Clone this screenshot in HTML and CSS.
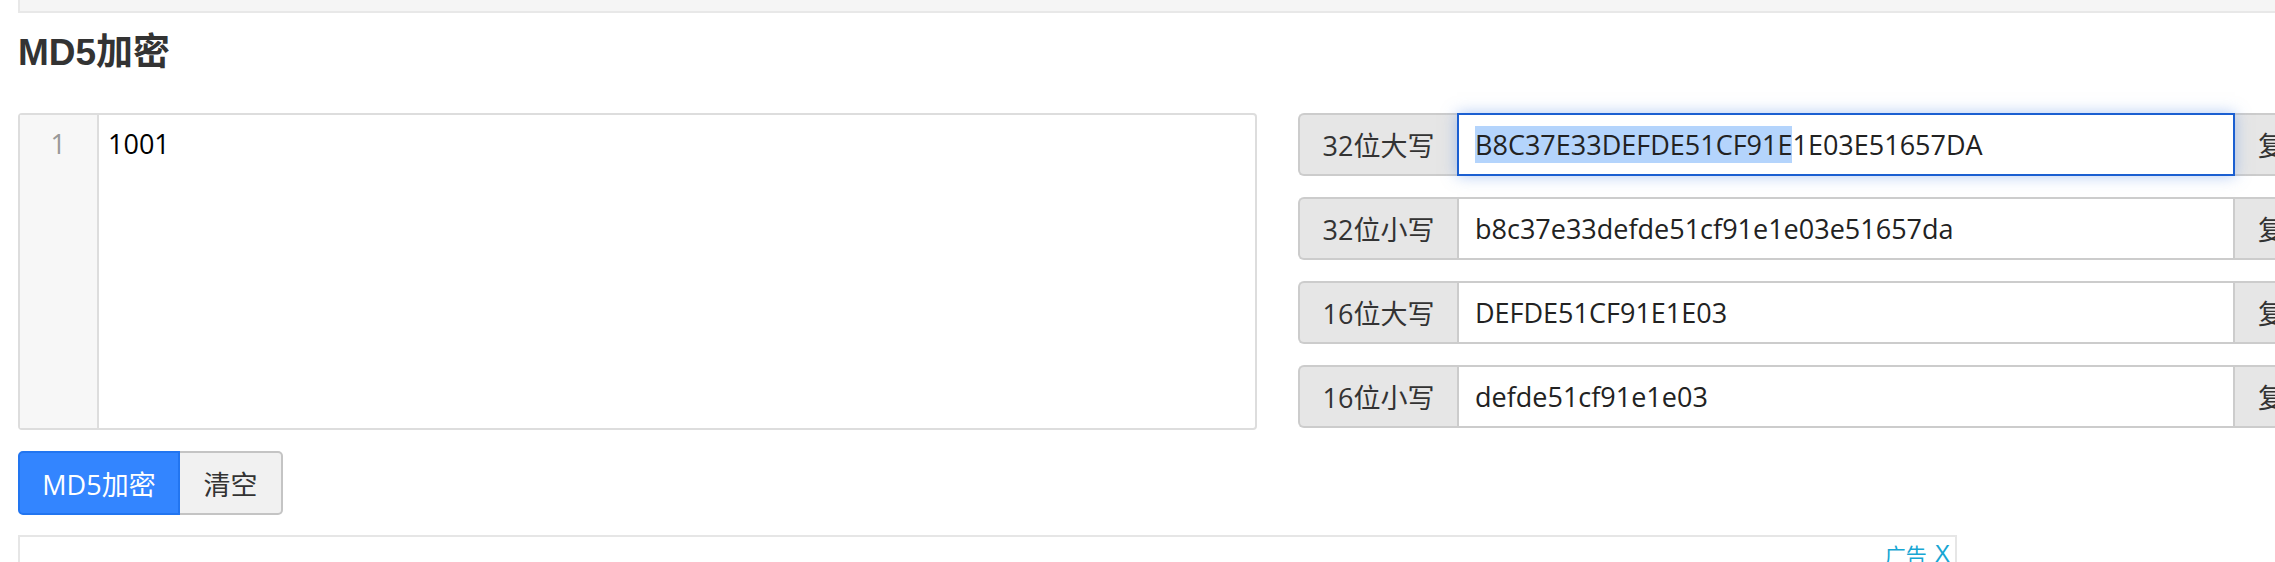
FILE: index.html
```html
<!DOCTYPE html>
<html lang="zh-CN">
<head>
<meta charset="utf-8">
<title>MD5加密</title>
<link rel="stylesheet" href="styles.css">
</head>
<body>
<div class="page">
  <div class="topbar"></div>
  <h3 class="title">MD5加密</h3>
  <div class="tool">
    <div class="left">
      <div class="editor">
        <div class="gutter"><span class="ln">1</span></div>
        <div class="code">1001</div>
      </div>
      <div class="btn-group">
        <button class="btn btn-primary">MD5加密</button><button class="btn btn-default">清空</button>
      </div>
    </div>
    <div class="right">
      <div class="row">
        <span class="addon">32位大写</span>
        <div class="field focused"><span class="sel">B8C37E33DEFDE51CF91E</span>1E03E51657DA</div>
        <span class="copy">复制</span>
      </div>
      <div class="row">
        <span class="addon">32位小写</span>
        <div class="field">b8c37e33defde51cf91e1e03e51657da</div>
        <span class="copy">复制</span>
      </div>
      <div class="row">
        <span class="addon">16位大写</span>
        <div class="field">DEFDE51CF91E1E03</div>
        <span class="copy">复制</span>
      </div>
      <div class="row">
        <span class="addon">16位小写</span>
        <div class="field">defde51cf91e1e03</div>
        <span class="copy">复制</span>
      </div>
    </div>
  </div>
  <div class="ad">
    <span class="ad-label">广告<span class="ad-x">X</span></span>
  </div>
</div>
</body>
</html>
```

FILE: styles.css
```css
html, body {
  margin: 0;
  padding: 0;
  background: #fff;
  overflow: hidden;
}

.page {
  width: 2400px;
  padding-left: 18px;
  font-family: "Open Sans", "Noto Sans CJK SC", sans-serif;
  font-size: 27px;
  color: #333;
}

.topbar {
  height: 11px;
  background: #f5f5f5;
  border-left: 2px solid #e8e8e8;
  border-bottom: 2px solid #e8e8e8;
}

.title {
  margin: 20px 0 40px;
  font-family: "Liberation Sans", "Noto Sans CJK SC", sans-serif;
  font-size: 37px;
  line-height: 40px;
  font-weight: bold;
  color: #333;
}

.tool {
  display: flex;
  gap: 41px;
  align-items: flex-start;
}

.left {
  width: 1239px;
  display: flex;
  flex-direction: column;
  gap: 21px;
}

.editor {
  display: flex;
  height: 313px;
  border: 2px solid #ddd;
  border-radius: 4px;
  background: #fff;
}

.gutter {
  width: 79px;
  background: #f7f7f7;
  border-right: 2px solid #ddd;
  text-align: right;
  box-sizing: border-box;
  padding: 9px 31px 0 0;
  line-height: 40px;
}

.ln {
  color: #999;
}

.code {
  flex: 1;
  padding: 9px 0 0 9px;
  line-height: 40px;
  color: #000;
}

.btn-group {
  display: flex;
}

.btn {
  height: 64px;
  font-family: "Open Sans", "Noto Sans CJK SC", sans-serif;
  font-size: 27px;
  padding: 0;
  border: 2px solid;
  margin: 0;
  white-space: nowrap;
  text-align: center;
}

.btn-primary {
  width: 162px;
  background: #3385ff;
  border-color: #2275f0;
  color: #fff;
  border-radius: 5px 0 0 5px;
}

.btn-default {
  width: 103px;
  background: #f1f1f1;
  border-color: #c4c4c4;
  border-left: 0;
  color: #333;
  border-radius: 0 5px 5px 0;
}

.right {
  width: 1040px;
  display: flex;
  flex-direction: column;
  gap: 21px;
}

.row {
  display: flex;
  height: 63px;
}

.addon {
  width: 159px;
  box-sizing: border-box;
  display: flex;
  align-items: center;
  justify-content: center;
  background: #e6e6e6;
  border: 2px solid #ccc;
  border-right: 0;
  border-radius: 6px 0 0 6px;
  color: #333;
}

.field {
  width: 778px;
  box-sizing: border-box;
  display: flex;
  align-items: center;
  padding-left: 16px;
  border: 2px solid #ccc;
  background: #fff;
  color: #222;
  white-space: nowrap;
}

.field.focused {
  border-color: #1b5fd1;
  box-shadow: 0 0 14px rgba(102, 150, 233, 0.5);
  position: relative;
  z-index: 1;
}

.sel {
  background: #b4d4fc;
}

.copy {
  width: 103px;
  box-sizing: border-box;
  display: flex;
  align-items: center;
  padding-left: 23px;
  background: #e6e6e6;
  border: 2px solid #ccc;
  border-left: 0;
  border-radius: 0 6px 6px 0;
  color: #333;
  white-space: nowrap;
}

.ad {
  margin-top: 20px;
  width: 1939px;
  height: 60px;
  box-sizing: border-box;
  border: 2px solid #e6e6e6;
  display: flex;
  justify-content: flex-end;
  align-items: flex-start;
  padding: 3px 5px 0 0;
}

.ad-label {
  font-family: "Noto Sans CJK SC", sans-serif;
  font-size: 21px;
  line-height: 28px;
  color: #17a6d3;
  display: flex;
  gap: 8px;
}

.ad-x {
  font-family: "Liberation Sans", sans-serif;
  font-size: 23px;
}
```
